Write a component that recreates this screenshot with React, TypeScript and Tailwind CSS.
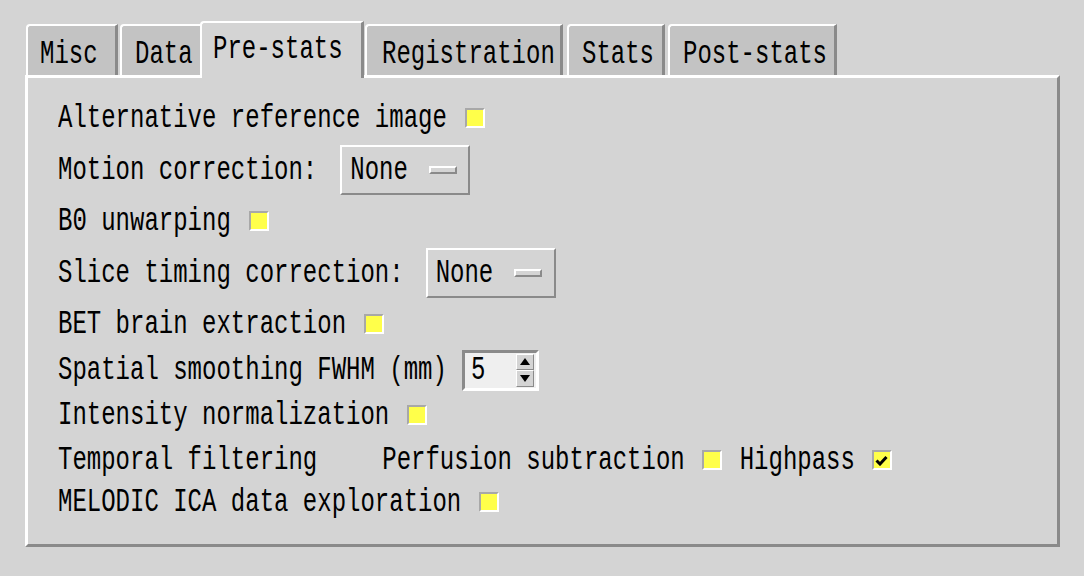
import React from 'react';

const font = { fontFamily: '"Liberation Mono", "DejaVu Sans Mono", monospace' };

// stretched label text, the reference font is tall and narrow
const T: React.FC<{ children: React.ReactNode; className?: string }> = ({ children, className = '' }) => (
  <span className={`inline-block whitespace-pre text-[24px] leading-none text-black scale-y-[1.42] ${className}`}>
    {children}
  </span>
);

const Check: React.FC<{ checked?: boolean; className?: string }> = ({ checked, className = '' }) => (
  <span
    className={`flex h-[20px] w-[20px] items-center justify-center border-2 border-t-[#a8a8a8] border-l-[#a8a8a8] border-b-white border-r-white bg-[#ffff4a] ${className}`}
  >
    {checked && (
      <svg width="13" height="11" viewBox="0 0 13 11">
        <path d="M1.5 5.5 L5 9 L11.5 2" fill="none" stroke="#000" strokeWidth="3" />
      </svg>
    )}
  </span>
);

const Dropdown: React.FC<{ className?: string }> = ({ className = '' }) => (
  <div
    className={`flex h-[50px] w-[130px] items-center border-2 border-t-white border-l-white border-b-[#8a8a8a] border-r-[#8a8a8a] bg-[#d4d4d4] pl-[8px] ${className}`}
  >
    <T>None</T>
    <span className="ml-[21px] h-[8px] w-[28px] border-2 border-t-white border-l-white border-b-[#8a8a8a] border-r-[#8a8a8a] bg-[#d4d4d4]" />
  </div>
);

const Row: React.FC<{ h: string; children: React.ReactNode }> = ({ h, children }) => (
  <div className={`flex items-center ${h}`}>{children}</div>
);

type Tab = { name: string; w: string; pl: string; active?: boolean; extra?: string };

const tabs: Tab[] = [
  { name: 'Misc', w: 'w-[92px]', pl: 'pl-[12px]', extra: 'mr-[2px]' },
  { name: 'Data', w: 'w-[84px]', pl: 'pl-[13px]' },
  { name: 'Pre-stats', w: 'w-[164px]', pl: 'pl-[11px]', active: true, extra: '-ml-[4px]' },
  { name: 'Registration', w: 'w-[198px]', pl: 'pl-[15px]', extra: 'ml-[1px]' },
  { name: 'Stats', w: 'w-[98px]', pl: 'pl-[13px]', extra: 'ml-[4px]' },
  { name: 'Post-stats', w: 'w-[169px]', pl: 'pl-[13px]', extra: 'ml-[3px]' },
];

export default function App() {
  return (
    <div className="h-[576px] w-[1084px] overflow-hidden bg-[#d4d4d4]" style={font}>
      <div className="pl-[26px] pt-[21px]">
        {/* Tab strip */}
        <div className="flex items-end">
          {tabs.map((t) =>
            t.active ? (
              <div
                key={t.name}
                className={`relative z-10 -mb-[3px] flex h-[57px] items-center rounded-tl-[4px] border-t-2 border-l-2 border-r-[3px] border-t-white border-l-white border-r-[#8a8a8a] bg-[#d4d4d4] pb-[3px] ${t.w} ${t.pl} ${t.extra ?? ''}`}
              >
                <T>{t.name}</T>
              </div>
            ) : (
              <div
                key={t.name}
                className={`flex h-[51px] items-center overflow-hidden rounded-tl-[4px] border-t-2 border-l-2 border-r-[3px] border-t-white border-l-white border-r-[#8a8a8a] bg-[#c3c3c3] pt-[6px] ${t.w} ${t.pl} ${t.extra ?? ''}`}
              >
                <T>{t.name}</T>
              </div>
            ),
          )}
        </div>
      </div>

      {/* Panel */}
      <div className="ml-[25px] h-[472px] w-[1035px] border-[3px] border-t-white border-l-white border-b-[#8a8a8a] border-r-[#8a8a8a] pl-[30px] pt-[14px]">
        <Row h="h-[52px]">
          <T>Alternative reference image</T>
          <Check className="ml-[18px]" />
        </Row>
        <Row h="h-[51px]">
          <T>Motion correction:</T>
          <Dropdown className="ml-[23px]" />
        </Row>
        <Row h="h-[52px]">
          <T>B0 unwarping</T>
          <Check className="ml-[18px]" />
        </Row>
        <Row h="h-[52px]">
          <T>Slice timing correction:</T>
          <Dropdown className="ml-[22px]" />
        </Row>
        <Row h="h-[50px]">
          <T>BET brain extraction</T>
          <Check className="ml-[18px]" />
        </Row>
        <Row h="h-[42px]">
          <T>Spatial smoothing FWHM (mm)</T>
          <div className="ml-[15px] flex h-[41px] w-[77px] items-center border-[3px] border-t-[#8a8a8a] border-l-[#8a8a8a] border-b-white border-r-white bg-[#efefef] pl-[6px] pr-[2px]">
            <T>5</T>
            <div className="ml-auto flex h-[33px] w-[18px] flex-col">
              <span className="flex h-1/2 items-center justify-center border border-t-white border-l-white border-b-[#8a8a8a] border-r-[#8a8a8a] bg-[#d4d4d4]">
                <svg width="10" height="7" viewBox="0 0 10 7"><path d="M5 0 L10 7 L0 7 Z" fill="#000" /></svg>
              </span>
              <span className="flex h-1/2 items-center justify-center border border-t-white border-l-white border-b-[#8a8a8a] border-r-[#8a8a8a] bg-[#d4d4d4]">
                <svg width="10" height="7" viewBox="0 0 10 7"><path d="M0 0 L10 0 L5 7 Z" fill="#000" /></svg>
              </span>
            </div>
          </div>
        </Row>
        <Row h="h-[48px]">
          <T>Intensity normalization</T>
          <Check className="ml-[18px]" />
        </Row>
        <Row h="h-[42px]">
          <T>Temporal filtering</T>
          <T className="ml-[65px]">Perfusion subtraction</T>
          <Check className="ml-[17px]" />
          <T className="ml-[18px]">Highpass</T>
          <Check checked className="ml-[17px]" />
        </Row>
        <Row h="h-[42px]">
          <T>MELODIC ICA data exploration</T>
          <Check className="ml-[18px]" />
        </Row>
      </div>
    </div>
  );
}
